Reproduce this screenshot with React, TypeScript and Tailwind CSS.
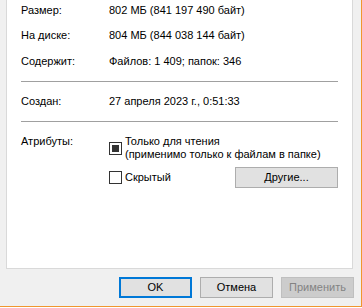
import React from "react";

function Row({ label, value }: { label: string; value: string }) {
  return (
    <div className="flex leading-[13px]">
      <div className="w-[88px] shrink-0">{label}</div>
      <div className="whitespace-nowrap">{value}</div>
    </div>
  );
}

function WinButton({
  children,
  className = "",
}: {
  children: React.ReactNode;
  className?: string;
}) {
  return (
    <div
      className={`flex h-[21px] w-[73px] items-center justify-center border ${className}`}
    >
      {children}
    </div>
  );
}

export default function App() {
  return (
    <div
      className="flex h-[307px] w-[362px] flex-col border-r border-b border-[#f0962e] bg-[#f0f0f0] text-[11px] text-black"
      style={{ fontFamily: '"Liberation Sans", Arial, sans-serif' }}
    >
      {/* tab page */}
      <div className="ml-[6px] flex h-[269px] w-[347px] flex-col border-x border-b border-[#d9d9d9] bg-white px-[14px] pt-[4px]">
        <Row label="Размер:" value="802 МБ (841 197 490 байт)" />
        <div className="mt-[12px]">
          <Row label="На диске:" value="804 МБ (844 038 144 байт)" />
        </div>
        <div className="mt-[13px]">
          <Row label="Содержит:" value="Файлов: 1 409; папок: 346" />
        </div>
        <div className="mt-[13px] h-px bg-[#a0a0a0]" />
        <div className="mt-[13px]">
          <Row label="Создан:" value="27 апреля 2023 г., 0:51:33" />
        </div>
        <div className="mt-[13px] h-px bg-[#a0a0a0]" />

        <div className="mt-[13px] flex leading-[13px]">
          <div className="w-[88px] shrink-0">Атрибуты:</div>
          <div className="flex flex-1 flex-col">
            <div className="flex items-start gap-[3px]">
              <div className="mt-[7px] flex h-[13px] w-[13px] shrink-0 items-center justify-center border border-[#333333] bg-white">
                <div className="h-[7px] w-[7px] bg-[#333333]" />
              </div>
              <div className="whitespace-nowrap">
                <div>Только для чтения</div>
                <div>(применимо только к файлам в папке)</div>
              </div>
            </div>
            <div className="mt-[6px] flex h-[21px] items-center justify-between">
              <div className="flex items-center gap-[3px]">
                <div className="h-[13px] w-[13px] border border-[#333333] bg-white" />
                <div>Скрытый</div>
              </div>
              <div className="flex h-[21px] w-[103px] items-center justify-center border border-[#adadad] bg-[#e1e1e1]">
                Другие...
              </div>
            </div>
          </div>
        </div>
      </div>

      {/* dialog buttons */}
      <div className="mt-[8px] flex justify-end gap-[8px] pr-[7px]">
        <WinButton className="border-2 border-[#0078d7] bg-[#e1e1e1]">OK</WinButton>
        <WinButton className="border-[#adadad] bg-[#e1e1e1]">Отмена</WinButton>
        <WinButton className="border-[#bfbfbf] bg-[#cccccc] text-[#838383]">
          Применить
        </WinButton>
      </div>
    </div>
  );
}
